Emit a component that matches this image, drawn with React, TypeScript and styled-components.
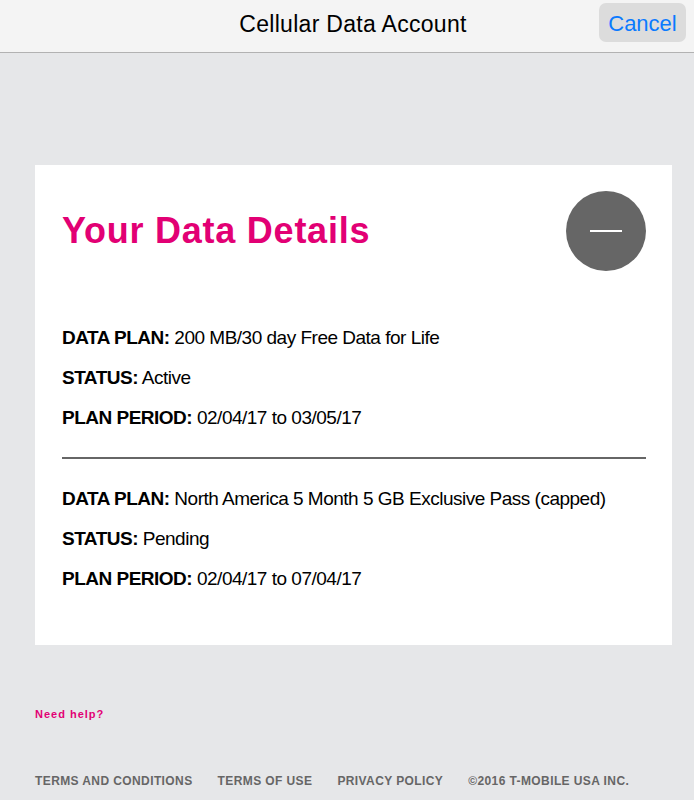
import { styled, createGlobalStyle } from 'styled-components';

const GlobalStyle = createGlobalStyle`
  html, body {
    margin: 0;
    padding: 0;
    background: #e6e7e9;
  }
  body {
    font-family: "Liberation Sans", Arial, sans-serif;
  }
`;

const sans = `"Liberation Sans", Arial, sans-serif`;

const plans = [
  {
    plan: '200 MB/30 day Free Data for Life',
    status: 'Active',
    period: '02/04/17 to 03/05/17',
  },
  {
    plan: 'North America 5 Month 5 GB Exclusive Pass (capped)',
    status: 'Pending',
    period: '02/04/17 to 07/04/17',
  },
];

const footerLinks = ['TERMS AND CONDITIONS', 'TERMS OF USE', 'PRIVACY POLICY', '©2016 T-MOBILE USA INC.'];

function App() {
  return (
    <Page>
      <GlobalStyle />
      <NavBar>
        <NavTitle>Cellular Data Account</NavTitle>
        <CancelButton>Cancel</CancelButton>
      </NavBar>

      <Content>
        <Card>
          <CardHeader>
            <Heading>Your Data Details</Heading>
            <CollapseButton aria-label="collapse">
              <span />
            </CollapseButton>
          </CardHeader>

          {plans.map((p, index) => (
            <PlanGroup key={p.plan} $divider={index > 0}>
              <Row>
                <Label>DATA PLAN:</Label> {p.plan}
              </Row>
              <Row>
                <Label>STATUS:</Label> {p.status}
              </Row>
              <Row>
                <Label>PLAN PERIOD:</Label> {p.period}
              </Row>
            </PlanGroup>
          ))}
        </Card>

        <HelpLink>Need help?</HelpLink>

        <Footer>
          {footerLinks.map((link) => (
            <FooterLink key={link}>{link}</FooterLink>
          ))}
        </Footer>
      </Content>
    </Page>
  );
}

export default App;

const Page = styled.div`
  width: 694px;
  height: 800px;
  background: #e6e7e9;
  overflow: hidden;
`;

const NavBar = styled.div`
  position: relative;
  height: 52px;
  background: #f4f4f4;
  border-bottom: 1px solid #b2b2b2;
  display: flex;
  justify-content: center;
  align-items: center;
`;

const NavTitle = styled.div`
  font-size: 23px;
  letter-spacing: 0.3px;
  color: #000;
  margin-top: -3px;
  margin-left: 12px;
`;

const CancelButton = styled.button`
  position: absolute;
  right: 8px;
  top: 3px;
  width: 87px;
  height: 39px;
  border: none;
  border-radius: 7px;
  background: #dcdcdc;
  color: #0a7aff;
  font-family: ${sans};
  font-size: 22px;
  padding: 2px 0 0;
`;

const Content = styled.div`
  padding: 112px 22px 0 35px;
`;

const Card = styled.div`
  background: #fff;
  height: 480px;
  box-sizing: border-box;
  padding: 26px 26px 0 27px;
`;

const CardHeader = styled.div`
  display: flex;
  justify-content: space-between;
  align-items: center;
  margin-bottom: 55px;
`;

const Heading = styled.h1`
  margin: 0;
  font-family: ${sans};
  font-size: 36px;
  font-weight: 700;
  color: #e20074;
  letter-spacing: 0.75px;
`;

const CollapseButton = styled.div`
  width: 80px;
  height: 80px;
  border-radius: 50%;
  background: #666;
  display: flex;
  justify-content: center;
  align-items: center;

  span {
    display: block;
    width: 32px;
    height: 2px;
    background: #fff;
  }
`;

const PlanGroup = styled.div<{ $divider: boolean }>`
  display: flex;
  flex-direction: column;
  gap: 17px;
  border-top: ${(p) => (p.$divider ? '2px solid #666' : 'none')};
  padding-top: ${(p) => (p.$divider ? '28px' : '0')};
  margin-bottom: ${(p) => (p.$divider ? '0' : '28px')};
`;

const Row = styled.div`
  font-family: ${sans};
  font-size: 19px;
  line-height: 23px;
  letter-spacing: -0.5px;
  color: #000;
  white-space: nowrap;
`;

const Label = styled.span`
  font-weight: 700;
`;

const HelpLink = styled.a`
  display: block;
  margin-top: 63px;
  font-family: ${sans};
  font-size: 11px;
  font-weight: 700;
  color: #e20074;
  letter-spacing: 1px;
`;

const Footer = styled.div`
  display: flex;
  gap: 25px;
  margin-top: 54px;
`;

const FooterLink = styled.span`
  font-family: ${sans};
  font-size: 12px;
  font-weight: 700;
  color: #666;
  letter-spacing: 0.4px;
  white-space: nowrap;
`;
